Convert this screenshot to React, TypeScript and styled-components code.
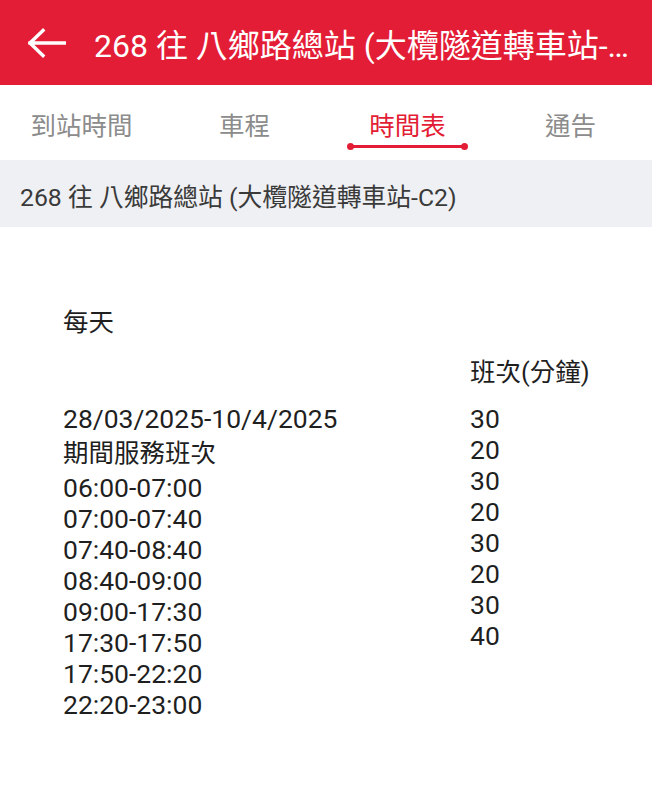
import React from 'react';
import { styled, createGlobalStyle } from 'styled-components';

const GlobalStyle = createGlobalStyle`
  html, body {
    margin: 0;
    padding: 0;
    background: #ffffff;
  }
  body {
    font-family: Roboto, "Noto Sans CJK TC", sans-serif;
  }
`;

const Page = styled.div`
  width: 652px;
  min-height: 800px;
  background: #ffffff;
`;

const AppBar = styled.header`
  height: 85px;
  background-color: #e31d35;
  display: flex;
  align-items: center;
  padding: 0 14px 0 28px;
  box-sizing: border-box;
  gap: 28px;
`;

const BackButton = styled.button`
  width: 38px;
  height: 38px;
  padding: 0;
  border: none;
  background: transparent;
  display: flex;
  align-items: center;
  justify-content: center;
  flex-shrink: 0;
  cursor: pointer;
`;

const Title = styled.h1`
  margin: 0;
  flex: 1;
  min-width: 0;
  color: #ffffff;
  font-size: 32px;
  font-weight: 400;
  white-space: nowrap;
  overflow: hidden;
  text-overflow: ellipsis;
`;

const TabBar = styled.nav`
  height: 75px;
  display: grid;
  grid-template-columns: repeat(4, 1fr);
  background: #ffffff;
`;

const Tab = styled.div<{ $active?: boolean }>`
  position: relative;
  display: flex;
  align-items: center;
  justify-content: center;
  padding-top: 2px;
  box-sizing: border-box;
  font-size: 25.5px;
  color: ${(p) => (p.$active ? '#e31d35' : '#8c8c8c')};
  cursor: pointer;
`;

const Indicator = styled.span`
  position: absolute;
  left: 50%;
  bottom: 12px;
  width: 119px;
  height: 3px;
  margin-left: -60px;
  background: #e31d35;
  border-radius: 2px;

  &::before,
  &::after {
    content: '';
    position: absolute;
    top: -2px;
    width: 7px;
    height: 7px;
    border-radius: 50%;
    background: #e31d35;
  }
  &::before {
    left: -1px;
  }
  &::after {
    right: -1px;
  }
`;

const RouteBar = styled.div`
  height: 67px;
  background: #eff0f3;
  display: flex;
  align-items: center;
  padding: 2px 20px 0;
  box-sizing: border-box;
  font-size: 24.8px;
  color: #3a3a3a;
`;

const Timetable = styled.section`
  display: grid;
  grid-template-columns: 407px 1fr;
  padding: 79px 0 0 63px;
  font-size: 26.5px;
  color: #1f1f1f;
`;

const DayLabel = styled.div`
  grid-column: 1 / span 2;
  font-size: 25.5px;
  line-height: 32px;
`;

const FreqHeader = styled.div`
  grid-column: 2;
  font-size: 25.5px;
  line-height: 32px;
  margin-top: 18px;
  margin-bottom: 15px;
`;

const Column = styled.div`
  display: flex;
  flex-direction: column;
`;

const Line = styled.div<{ $cjk?: boolean }>`
  white-space: nowrap;
  font-size: ${(p) => (p.$cjk ? '25.5px' : 'inherit')};
  line-height: ${(p) => (p.$cjk ? '38px' : 'normal')};
`;

const BackArrow = () => (
  <svg width="38" height="30" viewBox="0 0 38 30" fill="none">
    <path
      d="M2 15H37M2 15L15 2.5M2 15L15 27.5"
      stroke="#ffffff"
      strokeWidth="3.4"
      strokeLinecap="square"
    />
  </svg>
);

const tabs = ['到站時間', '車程', '時間表', '通告'];

const periods = [
  '28/03/2025-10/4/2025',
  '期間服務班次',
  '06:00-07:00',
  '07:00-07:40',
  '07:40-08:40',
  '08:40-09:00',
  '09:00-17:30',
  '17:30-17:50',
  '17:50-22:20',
  '22:20-23:00',
];

const frequencies = ['30', '20', '30', '20', '30', '20', '30', '40'];

const route = '268 往 八鄉路總站 (大欖隧道轉車站-C2)';

export default function App() {
  return (
    <Page>
      <GlobalStyle />
      <AppBar>
        <BackButton aria-label="返回">
          <BackArrow />
        </BackButton>
        <Title>{route}</Title>
      </AppBar>
      <TabBar>
        {tabs.map((t) => (
          <Tab key={t} $active={t === '時間表'}>
            {t}
            {t === '時間表' && <Indicator />}
          </Tab>
        ))}
      </TabBar>
      <RouteBar>{route}</RouteBar>
      <Timetable>
        <DayLabel>每天</DayLabel>
        <FreqHeader>班次(分鐘)</FreqHeader>
        <Column>
          {periods.map((p) => (
            <Line key={p} $cjk={p === '期間服務班次'}>
              {p}
            </Line>
          ))}
        </Column>
        <Column>
          {frequencies.map((f, i) => (
            <Line key={i}>{f}</Line>
          ))}
        </Column>
      </Timetable>
    </Page>
  );
}
